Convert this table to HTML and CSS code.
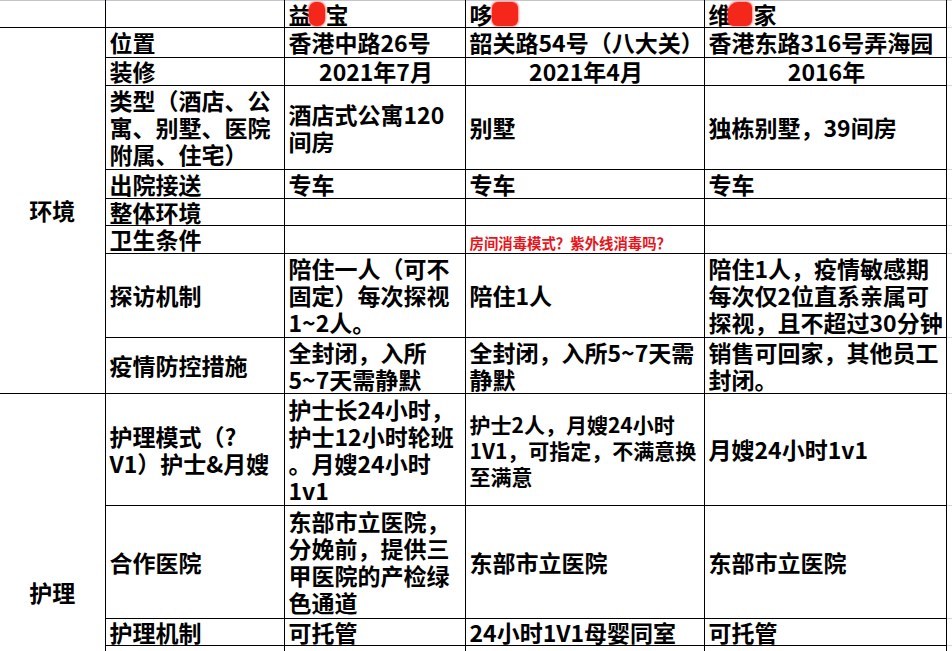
FILE: index.html
```html
<!DOCTYPE html>
<html lang="zh-CN">
<head>
<meta charset="utf-8">
<title>月子中心对比</title>
<link rel="stylesheet" href="styles.css">
</head>
<body>
<table class="sheet">
  <colgroup>
    <col class="c-group">
    <col class="c-label">
    <col class="c-a">
    <col class="c-b">
    <col class="c-c">
    <col class="c-pad">
  </colgroup>
  <tr class="r-head">
    <td class="group"></td>
    <td></td>
    <td>益<span class="redact r1"></span>宝</td>
    <td>哆<span class="redact r2"></span></td>
    <td>维<span class="redact r3"></span>家</td>
    <td class="pad"></td>
  </tr>
  <tr class="r30">
    <td class="group" rowspan="8">环境</td>
    <td>位置</td>
    <td>香港中路26号</td>
    <td>韶关路54号（八大关）</td>
    <td>香港东路316号弄海园</td>
    <td class="pad"></td>
  </tr>
  <tr class="r28">
    <td>装修</td>
    <td class="center">2021年7月</td>
    <td class="center">2021年4月</td>
    <td class="center">2016年</td>
    <td class="pad"></td>
  </tr>
  <tr class="r84">
    <td class="ml">类型（酒店、公<br>寓、别墅、医院<br>附属、住宅）</td>
    <td class="ml">酒店式公寓120<br>间房</td>
    <td>别墅</td>
    <td>独栋别墅，39间房</td>
    <td class="pad"></td>
  </tr>
  <tr class="r29">
    <td>出院接送</td>
    <td>专车</td>
    <td>专车</td>
    <td>专车</td>
    <td class="pad"></td>
  </tr>
  <tr class="r27">
    <td>整体环境</td>
    <td></td>
    <td></td>
    <td></td>
    <td class="pad"></td>
  </tr>
  <tr class="r28">
    <td>卫生条件</td>
    <td></td>
    <td><span class="note">房间消毒模式？紫外线消毒吗？</span></td>
    <td></td>
    <td class="pad"></td>
  </tr>
  <tr class="r84">
    <td>探访机制</td>
    <td class="ml">陪住一人（可不<br>固定）每次探视<br>1~2人。</td>
    <td>陪住1人</td>
    <td class="ml">陪住1人，疫情敏感期<br>每次仅2位直系亲属可<br>探视，且不超过30分钟</td>
    <td class="pad"></td>
  </tr>
  <tr class="r56">
    <td>疫情防控措施</td>
    <td class="ml">全封闭，入所<br>5~7天需静默</td>
    <td class="ml">全封闭，入所5~7天需<br>静默</td>
    <td class="ml">销售可回家，其他员工<br>封闭。</td>
    <td class="pad"></td>
  </tr>
  <tr class="r112">
    <td class="group" rowspan="4">护理</td>
    <td class="ml">护理模式（?<br>V1）护士&amp;月嫂</td>
    <td class="ml">护士长24小时，<br>护士12小时轮班<br>。月嫂24小时<br>1v1</td>
    <td class="small">护士2人，月嫂24小时<br>1V1，可指定，不满意换<br>至满意</td>
    <td>月嫂24小时1v1</td>
    <td class="pad"></td>
  </tr>
  <tr class="r113">
    <td>合作医院</td>
    <td class="ml">东部市立医院，<br>分娩前，提供三<br>甲医院的产检绿<br>色通道</td>
    <td>东部市立医院</td>
    <td>东部市立医院</td>
    <td class="pad"></td>
  </tr>
  <tr class="r27">
    <td>护理机制</td>
    <td>可托管</td>
    <td>24小时1V1母婴同室</td>
    <td>可托管</td>
    <td class="pad"></td>
  </tr>
  <tr class="r146">
    <td></td>
    <td></td>
    <td></td>
    <td></td>
    <td class="pad"></td>
  </tr>
</table>
</body>
</html>
```
FILE: styles.css
```css
html, body {
  margin: 0;
  padding: 0;
  background: #ffffff;
  overflow: hidden;
  height: 651px;
}

.sheet {
  border-collapse: collapse;
  table-layout: fixed;
  width: 952px;
  font-family: "Noto Sans CJK SC", "Noto Sans", sans-serif;
  font-weight: 700;
  font-size: 23px;
  line-height: 25px;
  color: #000000;
}

.c-group { width: 105px; }
.c-label { width: 179px; }
.c-a { width: 181px; }
.c-b { width: 239px; }
.c-c { width: 242px; }
.c-pad { width: 6px; }

.sheet td {
  border: 1px solid #000000;
  padding: 0 1px 0 4px;
  vertical-align: middle;
  white-space: nowrap;
  overflow: hidden;
}

.sheet td:first-child {
  border-left: none;
}

.sheet td.group {
  text-align: center;
  padding: 0;
}

.sheet td.pad {
  border-left: none;
  border-right: none;
  border-top: 1px solid #d6d8dc;
  border-bottom: 1px solid #d6d8dc;
  padding: 0;
}

.r-head td {
  border-top: 1px solid #c2c6cc;
  height: 26px;
}

.r27 td { height: 26px; }
.r28 td { height: 27px; }
.r29 td { height: 28px; }
.r30 td { height: 29px; }
.r56 td { height: 55px; }
.r84 td { height: 83px; }
.r112 td { height: 111px; }
.r113 td { height: 112px; }
.r146 td { height: 145px; }

.sheet td.ml {
  line-height: 27px;
}

.center {
  text-align: center;
}

.sheet td.small {
  font-size: 21px;
  line-height: 26px;
}

.note {
  font-size: 14.4px;
  line-height: 20px;
  color: #e8141c;
  font-weight: 700;
}

.redact {
  display: inline-block;
  height: 24px;
  vertical-align: top;
  background: #f5271a;
  border-radius: 7px;
  box-shadow: 0 0 2px 1px rgba(255, 90, 80, 0.7);
}

.r1 {
  width: 16px;
  margin: 0 1px 0 -3px;
}

.r2 {
  width: 26px;
  margin-left: -1px;
  border-radius: 6px;
}

.r3 {
  width: 24px;
  margin: 0 2px 0 -4px;
  border-radius: 10px 6px 6px 6px;
}
```
